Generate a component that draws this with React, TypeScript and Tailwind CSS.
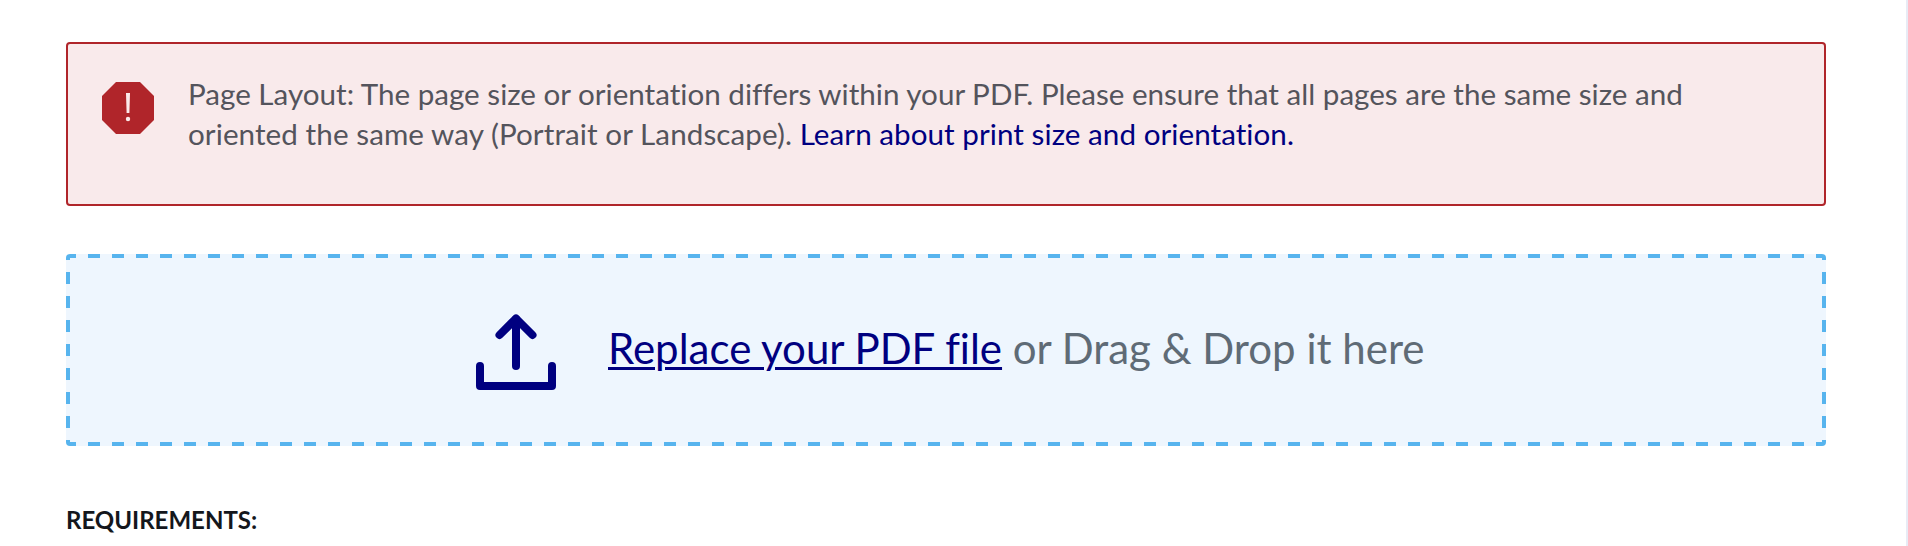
import React from 'react';

// dashes are 12px on / 12px off, longer than what border-dashed draws
const dashed =
  "[background-image:linear-gradient(to_right,#57b4ee_50%,transparent_50%),linear-gradient(to_right,#57b4ee_50%,transparent_50%),linear-gradient(to_bottom,#57b4ee_50%,transparent_50%),linear-gradient(to_bottom,#57b4ee_50%,transparent_50%)] [background-size:24px_4px,24px_4px,4px_24px,4px_24px] [background-position:-2px_top,-2px_bottom,left_-6px,right_-6px] [background-repeat:repeat-x,repeat-x,repeat-y,repeat-y]";

const UploadIcon = () => (
  <svg width="80" height="76" viewBox="0 0 80 76" fill="none" stroke="#000080" strokeWidth="8" strokeLinecap="round" strokeLinejoin="round" className="mt-[4px]">
    <path d="M40 5 L40 52" />
    <path d="M23.5 21 L40 4.5 L56.5 21" />
    <path d="M4 52 L4 72 L76 72 L76 52" />
  </svg>
);

export default function App() {
  return (
    <div className="h-[546px] overflow-hidden bg-white font-['Lato',sans-serif] [font-variant-ligatures:none] border-r-2 border-[#e8ebf5]">
      <div className="pt-[42px] pl-[66px] w-[1826px]">
        <div className="h-[164px] rounded-[4px] border-2 border-[#b0252a] bg-[#f9eaeb] flex items-start pt-[30px] pl-[34px]">
          <svg width="52" height="52" viewBox="0 0 52 52" className="shrink-0 mt-[8px]">
            <polygon points="14,0 38,0 52,14 52,38 38,52 14,52 0,38 0,14" fill="#b0252a" />
            <path d="M24 11 L28 11 L27.4 31 L24.6 31 Z" fill="#fbeaea" />
            <circle cx="26" cy="37" r="2.2" fill="#fbeaea" />
          </svg>
          <p className="ml-[34px] text-[29.6px] leading-[40px] text-[#54545c]">
            Page Layout: The page size or orientation differs within your PDF. Please ensure that all pages are the same size and<br />
            <span className="tracking-[0.08px]">oriented the same way (Portrait or Landscape). </span><a className="text-[#000080] tracking-[0.05px]">Learn about print size and orientation.</a>
          </p>
        </div>
        <div className={`mt-[48px] h-[192px] rounded-[4px] bg-[#eef6fe] flex items-center pl-[410px] ${dashed}`}>
          <UploadIcon />
          <p className="ml-[52px] mb-[4px] text-[42px] leading-none text-[#5f6b76]">
            <a className="text-[#000080] underline decoration-[3px] underline-offset-[3px]">Replace your PDF file</a> or Drag &amp; Drop it here
          </p>
        </div>
        <p className="mt-[60px] text-[24px] leading-[28px] font-bold text-[#14171c]">REQUIREMENTS:</p>
      </div>
    </div>
  );
}
